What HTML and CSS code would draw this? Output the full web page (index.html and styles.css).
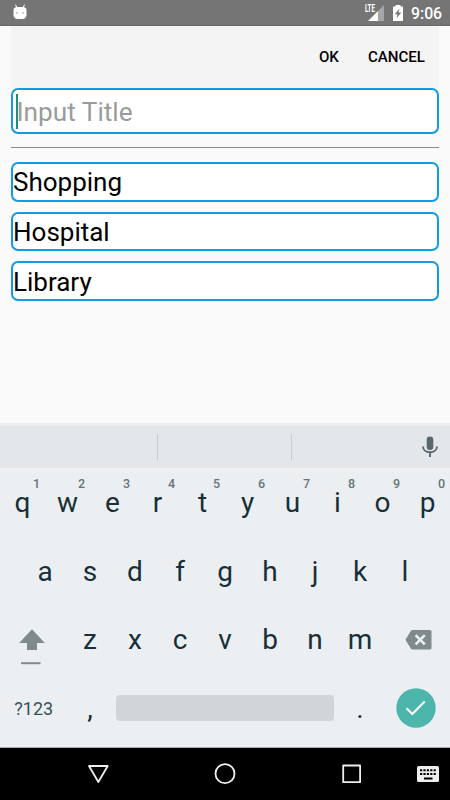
FILE: index.html
```html
<!DOCTYPE html>
<html lang="en">
<head>
<meta charset="utf-8">
<title>Input Title</title>
<link rel="stylesheet" href="styles.css">
</head>
<body>
<div class="screen">
  <header class="status">
    <svg class="droid" width="14" height="16" viewBox="0 0 14 17" preserveAspectRatio="none"><path d="M2.4 0.6L4 4M11.6 0.6L10 4" stroke="#fff" stroke-width="1"/><path d="M0.5 6Q1 3.2 4 3.2H10Q13 3.2 13.500 6V12Q13 15.700 9.500 16H4.500Q1 15.700 0.500 12Z" fill="#fff"/><circle cx="3.800" cy="9.500" r=".7" fill="#777"/><circle cx="10" cy="9.500" r=".7" fill="#777"/></svg>
    <span class="lte">LTE</span>
    <svg class="signal" width="16" height="16" viewBox="0 0 16 16"><path d="M10 6L16 0V16H10Z" fill="#a6a6a6"/><path d="M0 16L10 6V16Z" fill="#fff"/></svg>
    <svg class="battery" width="10" height="16" viewBox="0 0 10 16"><path d="M0 1.500H2.500V0H7.500V1.500H10V16H0Z" fill="#fff"/><path d="M6.500 3.500L1.800 9.300H4.500L3.500 13.300L8.300 7.400H5.500Z" fill="#757575"/></svg>
    <span class="clock">9:06</span>
  </header>
  <main class="dialog">
    <div class="actions"><span>OK</span><span>CANCEL</span></div>
    <div class="field title"><i class="caret"></i>Input Title</div>
    <hr class="rule">
    <div class="list">
      <div class="field">Shopping</div>
      <div class="field">Hospital</div>
      <div class="field">Library</div>
    </div>
  </main>
  <section class="keyboard">
    <div class="suggest">
      <i></i><i></i>
      <svg class="mic" width="16" height="22" viewBox="0 0 16 22"><rect x="4.700" y="0.500" width="6.600" height="13.500" rx="3.200" fill="#5a686d"/><path d="M1 10.500C1 18.200 15 18.200 15 10.500M8 16V21" fill="none" stroke="#5a686d" stroke-width="1.900"/></svg>
    </div>
    <div class="row"><b>q<sup>1</sup></b><b>w<sup>2</sup></b><b>e<sup>3</sup></b><b>r<sup>4</sup></b><b>t<sup>5</sup></b><b>y<sup>6</sup></b><b>u<sup>7</sup></b><b>i<sup>8</sup></b><b>o<sup>9</sup></b><b>p<sup>0</sup></b></div>
    <div class="row middle"><b>a</b><b>s</b><b>d</b><b>f</b><b>g</b><b>h</b><b>j</b><b>k</b><b>l</b></div>
    <div class="row">
      <span class="wide shift"><svg width="26" height="36" viewBox="0 0 26 36"><path d="M13 .3L25.800 14H18V21H8V14H.2Z" fill="#7f8a8d"/><path d="M2 33.200H21.500V35.200H2Z" fill="#7f8a8d"/></svg></span>
      <b>z</b><b>x</b><b>c</b><b>v</b><b>b</b><b>n</b><b>m</b>
      <span class="wide erase"><svg width="27" height="20" viewBox="0 0 27 20"><path d="M7.500 0H25Q26.500 0 26.500 1.500V18Q26.500 19.500 25 19.500H7.500Q6.500 19.500 5.800 18.500L.4 9.800L5.800 1Q6.500 0 7.500 0Z" fill="#7f8a8d"/><path d="M10.600 5.200L19.800 14.400M19.800 5.200L10.600 14.400" stroke="#eceff1" stroke-width="2.600"/></svg></span>
    </div>
    <div class="row">
      <span class="wide symbols">?123</span><b>,</b><span class="space"></span><b>.</b>
      <span class="wide enter"><svg width="40" height="40" viewBox="0 0 40 40"><circle cx="20" cy="20" r="19.700" fill="#4db6ac"/><path d="M10.500 20.300L16.300 26L28.700 13.400" fill="none" stroke="#fff" stroke-width="2.100"/></svg></span>
    </div>
  </section>
  <nav class="nav">
    <svg width="450" height="52" viewBox="0 0 450 52" fill="none" stroke="#eee" stroke-width="1.800" stroke-linejoin="round">
      <path d="M89 18H107.700L98.350 34Z"/>
      <circle cx="225" cy="25.700" r="9.500"/>
      <rect x="343.200" y="17.500" width="16.900" height="16.700"/>
      <rect x="417" y="18" width="22" height="16" rx="1.500" fill="#eee" stroke="none"/>
      <path d="M420 22.200H437M420 26H437" stroke="#000" stroke-width="2" stroke-dasharray="2.200 1.200"/>
      <path d="M424 30.500H432.500" stroke="#000" stroke-width="2"/>
    </svg>
  </nav>
</div>
</body>
</html>
```
FILE: styles.css
```css
* { box-sizing: border-box; }
body { margin: 0; font-family: Roboto, "Liberation Sans", sans-serif; }
svg { display: block; flex: none; }
.screen { width: 450px; height: 800px; display: flex; flex-direction: column; overflow: hidden; background: #fafafa; }
.status { height: 26px; flex: none; display: flex; align-items: flex-start; background: #757575; border-bottom: 1px solid #686868; color: #fff; }
.droid { margin: 4px 0 0 13px; }
.lte { margin: 4px 0 0 338px; width: 11px; font-size: 10.500px; line-height: 10px; font-weight: 700; transform: scaleX(.58); transform-origin: left; }
.signal { margin: 5px 0 0 -8px; }
.battery { margin: 5px 0 0 9px; }
.clock { margin: 4px 0 0 8px; font-size: 15.800px; line-height: 20px; font-weight: 500; }
.dialog { height: 397px; flex: none; padding: 0 11px; }
.actions { height: 62px; padding-right: 14px; display: flex; justify-content: flex-end; align-items: center; gap: 29px; background: #f4f4f4; color: #000; font-size: 15.100px; font-weight: 500; }
.field { height: 39.500px; display: flex; align-items: center; border: 2px solid #109be6; border-radius: 7px; background: #fff; color: #000; font-size: 26px; line-height: 36px; }
.title { height: 46px; padding-left: 4px; color: #9b9b9b; font-size: 26.200px; line-height: 42px; padding-top: 1px; }
.caret { width: 2px; height: 35px; margin: 0 -1.500px 0 -1px; background: #23897b; }
.rule { margin: 13px 0 14px; height: 1px; border: 0; background: #8d8d8d; }
.list { display: flex; flex-direction: column; gap: 10.200px; }
.list .field { padding-top: 1px; }
.keyboard { height: 325px; flex: none; background: #eceff1; border-bottom: 1px solid #aaa; }
.suggest { height: 47px; margin-bottom: -1.500px; display: flex; align-items: center; border-top: 3px solid #eee; border-bottom: 2px solid #f0f2f3; background: #e4e7e9; padding-left: 157px; }
.suggest i { width: 1px; height: 26px; margin-right: 133px; background: #c8cccf; }
.suggest .mic { margin-left: -3px; }
.row { height: 68.700px; display: flex; align-items: center; color: #182f3a; }
.middle { padding-left: 22.500px; }
.row b { position: relative; width: 45px; font-size: 28px; line-height: 34px; font-weight: 400; text-align: center; }
.row sup { position: absolute; top: -9px; left: 32px; width: 9px; font-size: 12.500px; line-height: 14px; font-weight: 500; color: #66757a; }
.wide { width: 67.500px; display: flex; align-items: center; justify-content: center; }
.shift { justify-content: flex-start; padding: 14px 0 0 19px; }
.erase { justify-content: flex-end; padding-right: 18px; }
.symbols { font-size: 18px; color: #37505b; }
.space { width: 217.500px; height: 26px; margin: 0 3.750px 2px; border-radius: 4px; background: #d0d5d8; }
.enter { padding-bottom: 2px; }
.nav { height: 52px; flex: none; background: #000; }
```
